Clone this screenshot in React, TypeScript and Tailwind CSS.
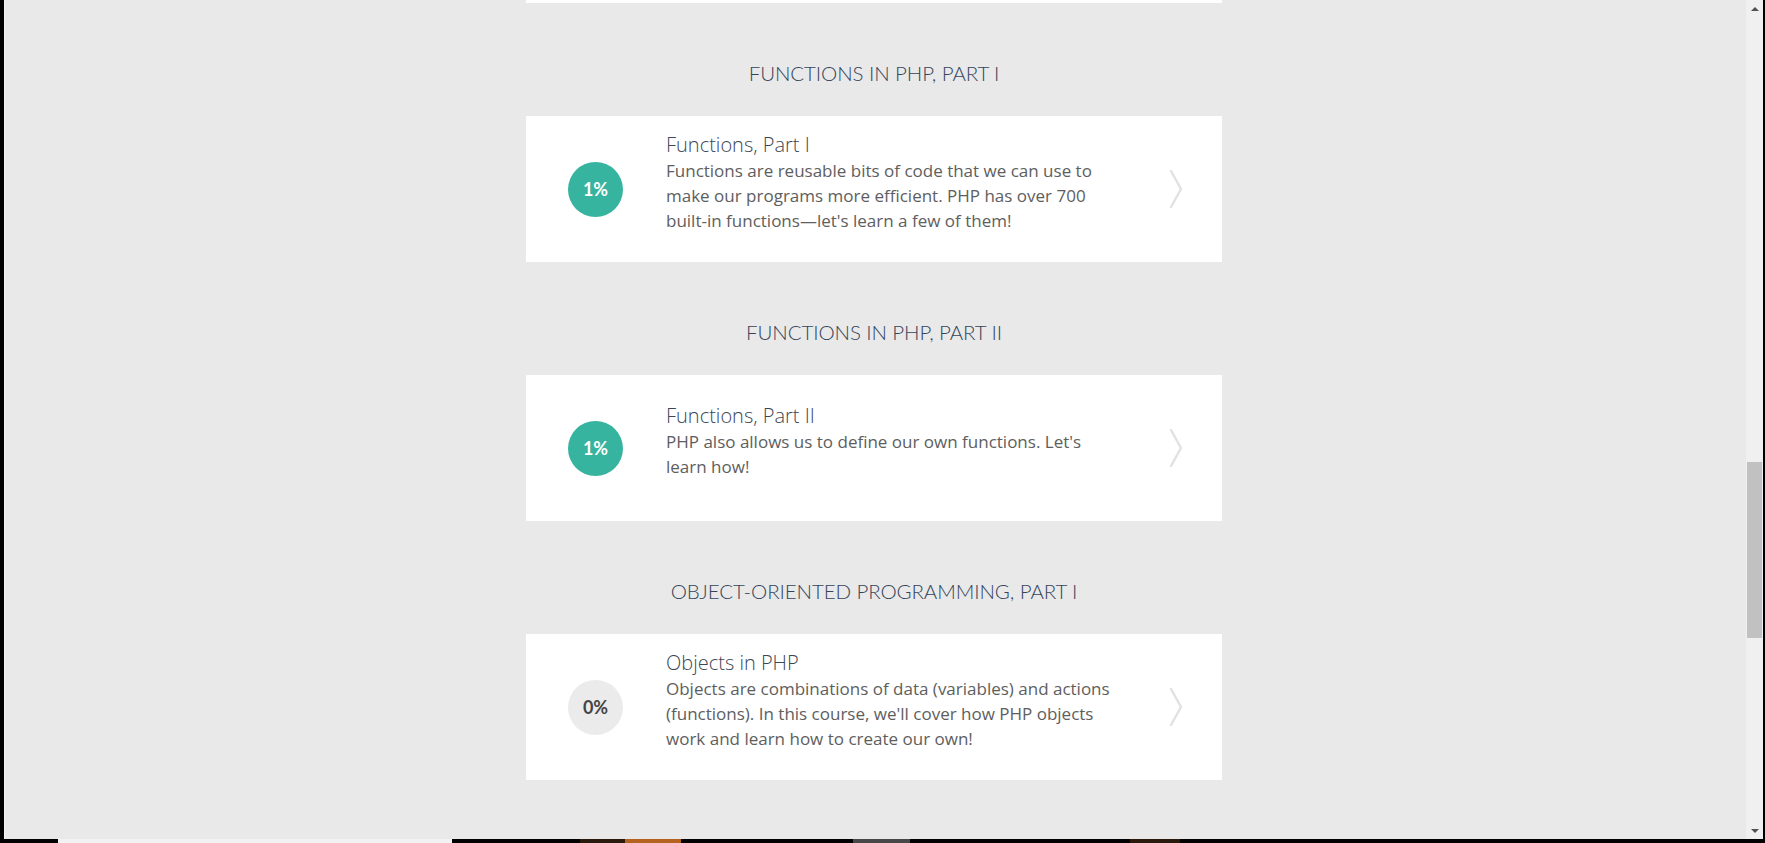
const lessons = [
  {
    section: "FUNCTIONS IN PHP, PART I",
    title: "Functions, Part I",
    text: "Functions are reusable bits of code that we can use to make our programs more efficient. PHP has over 700 built-in functions—let's learn a few of them!",
    progress: 1,
  },
  {
    section: "FUNCTIONS IN PHP, PART II",
    title: "Functions, Part II",
    text: "PHP also allows us to define our own functions. Let's learn how!",
    progress: 1,
  },
  {
    section: "OBJECT-ORIENTED PROGRAMMING, PART I",
    title: "Objects in PHP",
    text: "Objects are combinations of data (variables) and actions (functions). In this course, we'll cover how PHP objects work and learn how to create our own!",
    progress: 0,
  },
];

function Chevron() {
  return (
    <svg width="14" height="38" viewBox="0 0 14 38" className="shrink-0">
      <polyline points="2,1 12,19 2,37" fill="none" stroke="#e2e2e2" strokeWidth="2.5" strokeLinecap="round" strokeLinejoin="round" />
    </svg>
  );
}

function LessonCard({ title, text, progress }: { title: string; text: string; progress: number }) {
  const started = progress > 0;
  return (
    <div className="w-[696px] h-[146px] bg-white flex items-center pl-[42px] pr-[39px]">
      <div
        className={
          started
            ? "w-[55px] h-[55px] rounded-full bg-[#36b49f] text-white flex items-center justify-center text-[18px] font-bold shrink-0"
            : "w-[55px] h-[55px] rounded-full bg-[#ebebeb] text-[#444] flex items-center justify-center text-[18px] font-bold shrink-0"
        }
      >
        {progress}%
      </div>
      <div className="ml-[43px] w-[460px] pb-[14px] font-['Open_Sans',sans-serif]">
        <h3 className="text-[20px] leading-[26px] font-light text-[#3b4756]">{title}</h3>
        <p className="text-[17px] leading-[25px] text-[#5e5e5e]">{text}</p>
      </div>
      <div className="flex-1" />
      <Chevron />
    </div>
  );
}

export default function App() {
  return (
    <div className="w-[1765px] h-[843px] bg-black overflow-hidden flex flex-col" style={{ fontFamily: "Lato, 'Open Sans', sans-serif" }}>
      <div className="h-[839px] flex pl-[4px] pr-[2px]">
        <div className="flex-1 bg-[#e9e9e9] border-l border-[#f3f3f3] pr-[3px] flex flex-col items-center">
          <div className="w-[696px] h-[3px] bg-white" />
          {lessons.map((l) => (
            <div key={l.title} className="flex flex-col items-center">
              <h2 className="pt-[56px] pb-[29px] text-[20.5px] leading-[28px] font-light text-[#34455a] tracking-[-0.1px]">
                {l.section}
              </h2>
              <LessonCard title={l.title} text={l.text} progress={l.progress} />
            </div>
          ))}
        </div>
        {/* scrollbar */}
        <div className="w-[17px] bg-[#f0f0f0] flex flex-col items-center">
          <div className="h-[17px] flex items-center justify-center">
            <div className="w-0 h-0 border-l-[4px] border-r-[4px] border-b-[4px] border-l-transparent border-r-transparent border-b-[#505050]" />
          </div>
          <div className="h-[445px]" />
          <div className="w-[15px] h-[176px] bg-[#c1c1c1]" />
          <div className="flex-1" />
          <div className="h-[17px] flex items-center justify-center">
            <div className="w-0 h-0 border-l-[4px] border-r-[4px] border-t-[4px] border-l-transparent border-r-transparent border-t-[#505050]" />
          </div>
        </div>
      </div>
      {/* taskbar edge */}
      <div className="h-[4px] flex">
        <div className="w-[58px]" />
        <div className="w-[394px] bg-[#f2f2f2]" />
        <div className="w-[128px]" />
        <div className="w-[45px] bg-[#2a1a0e]" />
        <div className="w-[56px] bg-[#b5621e]" />
        <div className="w-[172px]" />
        <div className="w-[57px] bg-[#474747]" />
        <div className="w-[220px]" />
        <div className="w-[50px] bg-[#2a1a0e]" />
      </div>
    </div>
  );
}
